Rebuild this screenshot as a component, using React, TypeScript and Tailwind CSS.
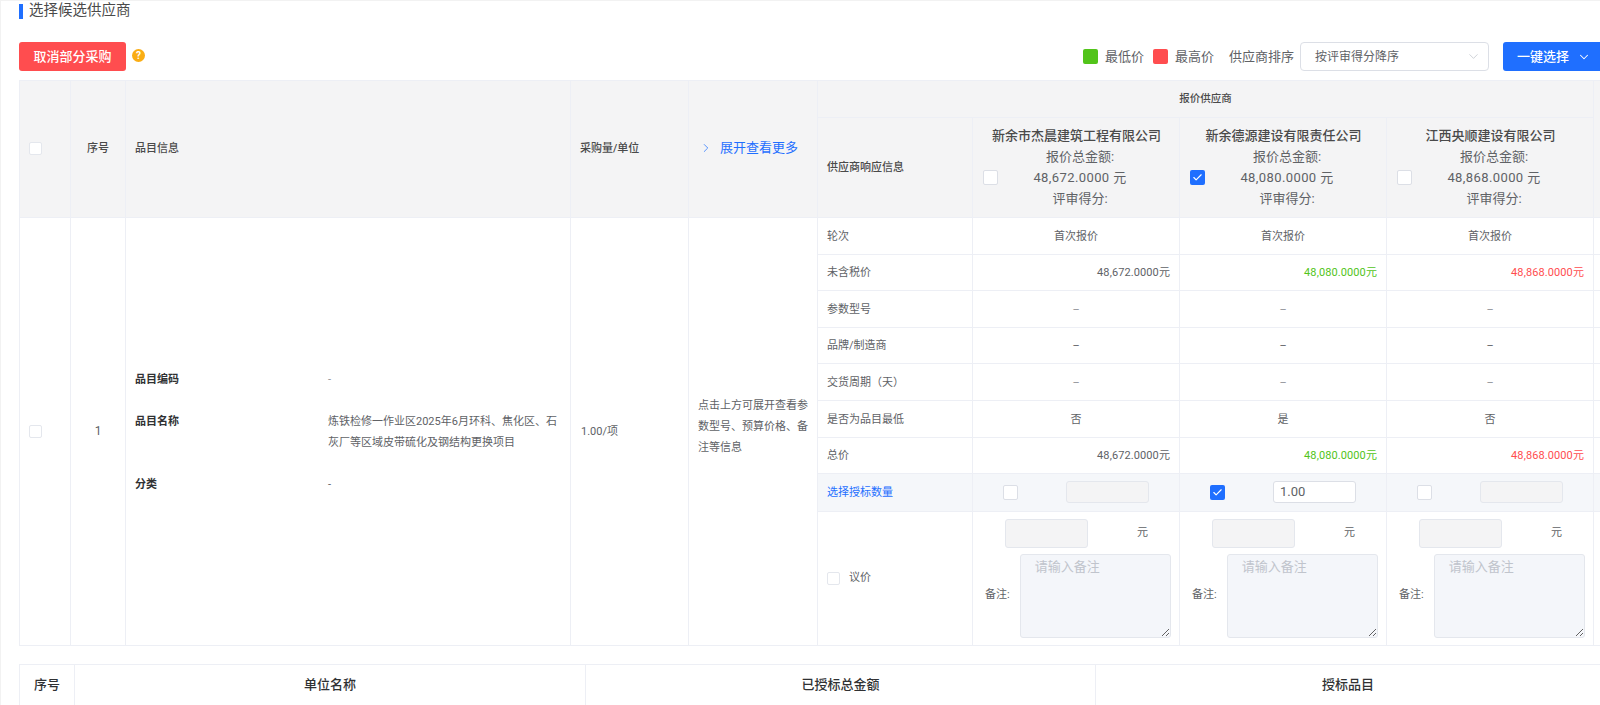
import { ChevronDown, ChevronRight, Check } from 'lucide-react'

const suppliers = [
  { name: '新余市杰晨建筑工程有限公司', total: '48,672.0000', color: 'text-[#606266]', lowest: '否', checked: false },
  { name: '新余德源建设有限责任公司', total: '48,080.0000', color: 'text-[#52c41a]', lowest: '是', checked: true },
  { name: '江西央顺建设有限公司', total: '48,868.0000', color: 'text-[#ff4d4f]', lowest: '否', checked: false },
]

const cellBorder = 'border border-[#edeff5]'
const labelCell = `${cellBorder} px-[9px] pt-[2px] text-[11px] text-[#606266]`

function Box({ checked = false, small = false }: { checked?: boolean; small?: boolean }) {
  if (checked) {
    return (
      <span className="w-[15px] h-[15px] shrink-0 rounded-[2px] bg-[#1f6fff] flex items-center justify-center">
        <Check size={11} strokeWidth={2.5} className="text-white" />
      </span>
    )
  }
  return (
    <span className={`block shrink-0 rounded-[2px] border bg-white ${small ? 'w-[13px] h-[13px] border-[#e4e7ed]' : 'w-[15px] h-[15px] border-[#dcdfe6]'}`} />
  )
}

function TextRow({ label, value, dim = false }: { label: string; value: (i: number) => string; dim?: boolean }) {
  return (
    <tr className="h-[36.6px]">
      <td className={labelCell}>{label}</td>
      {suppliers.map((s, i) => (
        <td key={s.name} className={`${cellBorder} pt-[2px] text-center text-[11px] ${dim ? 'text-[#909399]' : 'text-[#606266]'}`}>{value(i)}</td>
      ))}
      <td className={cellBorder} />
    </tr>
  )
}

function PriceRow({ label }: { label: string }) {
  return (
    <tr className="h-[36.6px]">
      <td className={labelCell}>{label}</td>
      {suppliers.map(s => (
        <td key={s.name} className={`${cellBorder} px-[9px] pt-[2px] text-right text-[11px] tracking-[0.1px] ${s.color}`}>{s.total}元</td>
      ))}
      <td className={cellBorder} />
    </tr>
  )
}

export default function App() {
  return (
    <div className="w-[1600px] h-[705px] overflow-hidden bg-white border-l border-t border-[#f2f2f2] pl-[18px] font-['Roboto','Noto_Sans_CJK_SC',sans-serif] text-[#606266]">
      <div className="h-[18px] mt-[1px] flex items-center gap-[6px]">
        <span className="w-[4px] h-[15px] bg-[#1f6fff]" />
        <span className="text-[14.5px] leading-[16px] mb-[1px] text-[#4a4a4a]">选择候选供应商</span>
      </div>

      <div className="mt-[22px] h-[29px] flex items-center justify-between">
        <div className="flex items-center gap-[6px]">
          <button className="w-[107px] h-[29px] rounded-[3px] bg-[#ff4d4f] text-white text-[13px] font-medium">取消部分采购</button>
          <span className="mb-[2px] w-[13px] h-[13px] rounded-full bg-[#faad14] text-white text-[10px] font-bold leading-[13px] text-center">?</span>
        </div>
        <div className="flex items-center">
          <span className="w-[15px] h-[15px] rounded-[2px] bg-[#52c41a]" />
          <span className="ml-[7px] text-[13px]">最低价</span>
          <span className="ml-[9px] w-[15px] h-[15px] rounded-[2px] bg-[#ff4d4f]" />
          <span className="ml-[7px] text-[13px]">最高价</span>
          <span className="ml-[15px] text-[13px]">供应商排序</span>
          <div className="ml-[6px] w-[189px] h-[29px] rounded-[4px] border border-[#dcdfe6] flex items-center justify-between pl-[14px] pr-[7px] text-[12px]">
            按评审得分降序
            <ChevronDown size={15} strokeWidth={1} className="text-[#b4b8c0]" />
          </div>
          <button className="ml-[14px] w-[97px] h-[29px] rounded-l-[3px] bg-[#1f6fff] text-white text-[13px] font-medium flex items-center pl-[14px] gap-[8px]">
            一键选择
            <ChevronDown size={14} strokeWidth={1.75} />
          </button>
        </div>
      </div>

      <table className="mt-[9px] table-fixed border-collapse w-[1582px]">
        <colgroup>
          <col className="w-[51px]" />
          <col className="w-[55px]" />
          <col className="w-[445px]" />
          <col className="w-[118px]" />
          <col className="w-[129px]" />
          <col className="w-[155px]" />
          <col className="w-[207px]" />
          <col className="w-[207px]" />
          <col className="w-[207px]" />
          <col className="w-[8px]" />
        </colgroup>
        <thead className="bg-[#f4f4f5]">
          <tr className="h-[37px]">
            <th rowSpan={2} className={`${cellBorder} pl-[9px] pb-[2px]`}>
              <Box small />
            </th>
            <th rowSpan={2} className={`${cellBorder} text-[11px] font-medium text-[#4a4a4a]`}>序号</th>
            <th rowSpan={2} className={`${cellBorder} px-[9px] text-left text-[11px] font-medium text-[#4a4a4a]`}>品目信息</th>
            <th rowSpan={2} className={`${cellBorder} px-[9px] text-left text-[11px] font-medium text-[#4a4a4a]`}>采购量/单位</th>
            <th rowSpan={2} className={`${cellBorder} font-normal`}>
              <div className="flex items-center gap-[7px] pl-[10px] pb-[3px] text-[13px] text-[#1f6fff]">
                <ChevronRight size={14} strokeWidth={1.25} />
                展开查看更多
              </div>
            </th>
            <th colSpan={4} className={`${cellBorder} text-[10.5px] font-medium text-[#4a4a4a]`}>报价供应商</th>
            <th rowSpan={2} className={cellBorder} />
          </tr>
          <tr className="h-[100px]">
            <th className={`${cellBorder} px-[9px] pt-[2px] text-left text-[11px] font-medium text-[#4a4a4a]`}>供应商响应信息</th>
            {suppliers.map(s => (
              <th key={s.name} className={`${cellBorder} pb-[2px] font-normal text-[13px] leading-[21px]`}>
                <div className="pl-[1px] font-medium text-[#4a4a4a]">{s.name}</div>
                <div className="flex items-center pl-[10px]">
                  <Box checked={s.checked} />
                  <div className="flex-1 pr-[17px] text-center">
                    <div>报价总金额:</div>
                    <div className="tracking-[0.4px]">{s.total} 元</div>
                    <div>评审得分:</div>
                  </div>
                </div>
              </th>
            ))}
          </tr>
        </thead>
        <tbody>
          <tr className="h-[36.6px]">
            <td rowSpan={9} className={`${cellBorder} pl-[9px]`}>
              <Box small />
            </td>
            <td rowSpan={9} className={`${cellBorder} text-center text-[12px]`}>1</td>
            <td rowSpan={9} className={`${cellBorder} px-[9px] pt-[2px]`}>
              <div className="grid grid-cols-[193px_1fr] items-start gap-y-[21px] text-[11px] leading-[21px]">
                <div className="font-bold text-[#303133]">品目编码</div>
                <div className="text-[#909399]">-</div>
                <div className="font-bold text-[#303133]">品目名称</div>
                <div>炼铁检修一作业区2025年6月环科、焦化区、石灰厂等区域皮带硫化及钢结构更换项目</div>
                <div className="font-bold text-[#303133]">分类</div>
                <div>-</div>
              </div>
            </td>
            <td rowSpan={9} className={`${cellBorder} px-[10px] pt-[2px] text-[11px]`}>1.00/项</td>
            <td rowSpan={9} className={`${cellBorder} px-[9px] pb-[10px] text-[11px] leading-[21px]`}>点击上方可展开查看参数型号、预算价格、备注等信息</td>
            <td className={labelCell}>轮次</td>
            {suppliers.map(s => (
              <td key={s.name} className={`${cellBorder} pt-[2px] text-center text-[11px]`}>首次报价</td>
            ))}
            <td className={cellBorder} />
          </tr>
          <PriceRow label="未含税价" />
          <TextRow label="参数型号" value={() => '–'} dim />
          <TextRow label="品牌/制造商" value={() => '–'} />
          <TextRow label="交货周期（天）" value={() => '–'} dim />
          <TextRow label="是否为品目最低" value={i => suppliers[i].lowest} />
          <PriceRow label="总价" />
          <tr className="h-[37.5px] bg-[#f5f7fa]">
            <td className={`${cellBorder} px-[9px] pt-[2px] text-[11px] text-[#1f6fff]`}>选择授标数量</td>
            {suppliers.map(s => (
              <td key={s.name} className={cellBorder}>
                <div className="flex items-center justify-between px-[30px]">
                  <Box checked={s.checked} />
                  {s.checked ? (
                    <div className="w-[83px] h-[22px] rounded-[3px] border border-[#dcdfe6] bg-white pl-[6px] text-[13px] leading-[20px]">1.00</div>
                  ) : (
                    <div className="w-[83px] h-[22px] rounded-[3px] border border-[#e4e7ed] bg-[#f4f4f5]" />
                  )}
                </div>
              </td>
            ))}
            <td className={cellBorder} />
          </tr>
          <tr className="h-[134px]">
            <td className={`${cellBorder} px-[9px]`}>
              <div className="flex items-center gap-[9px] text-[11px]">
                <Box small />
                议价
              </div>
            </td>
            {suppliers.map(s => (
              <td key={s.name} className={`${cellBorder} pl-[12px]`}>
                <div className="flex items-center pl-[20px]">
                  <div className="w-[83px] h-[29px] rounded-[3px] border border-[#e4e7ed] bg-[#f4f4f5]" />
                  <span className="ml-[49px] text-[11px]">元</span>
                </div>
                <div className="mt-[6px] flex items-center gap-[10px]">
                  <span className="shrink-0 text-[11px]">备注:</span>
                  <textarea
                    readOnly
                    placeholder="请输入备注"
                    className="w-[151px] h-[84px] rounded-[3px] border border-[#e4e7ed] bg-[#f4f6fa] px-[14px] py-[2px] text-[13px] placeholder:text-[#c0c4cc]"
                  />
                </div>
              </td>
            ))}
            <td className={cellBorder} />
          </tr>
        </tbody>
      </table>

      <table className="mt-[18px] table-fixed border-collapse w-[1582px]">
        <colgroup>
          <col className="w-[55px]" />
          <col className="w-[511px]" />
          <col className="w-[510px]" />
          <col />
        </colgroup>
        <thead>
          <tr className="h-[42px] text-[13px] text-[#303133]">
            <th className={`${cellBorder} font-medium`}>序号</th>
            <th className={`${cellBorder} font-medium`}>单位名称</th>
            <th className={`${cellBorder} font-medium`}>已授标总金额</th>
            <th className={`${cellBorder} font-medium`}>授标品目</th>
          </tr>
        </thead>
      </table>
    </div>
  )
}
